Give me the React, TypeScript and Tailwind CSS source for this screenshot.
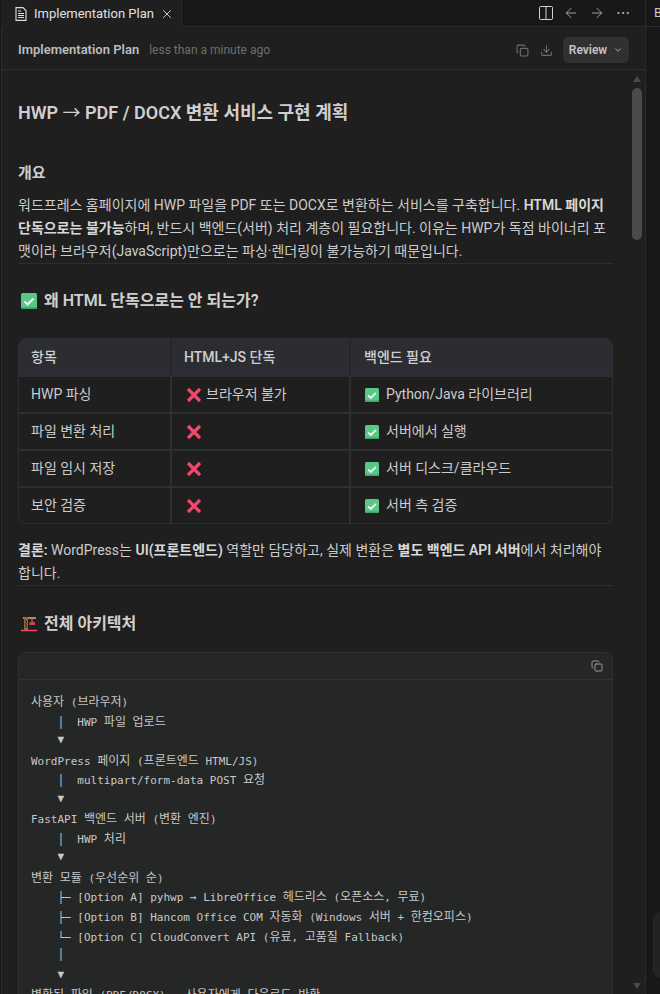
import { ArrowLeft, ArrowRight, ChevronDown, Copy, Download, Ellipsis, X } from "lucide-react";

const rows = [
  { item: "HWP 파싱", html: "브라우저 불가", backend: "Python/Java 라이브러리" },
  { item: "파일 변환 처리", html: "", backend: "서버에서 실행" },
  { item: "파일 임시 저장", html: "", backend: "서버 디스크/클라우드" },
  { item: "보안 검증", html: "", backend: "서버 측 검증" },
];

const codeLines = [
  "사용자 (브라우저)",
  "    │  HWP 파일 업로드",
  "    ▼",
  "WordPress 페이지 (프론트엔드 HTML/JS)",
  "    │  multipart/form-data POST 요청",
  "    ▼",
  "FastAPI 백엔드 서버 (변환 엔진)",
  "    │  HWP 처리",
  "    ▼",
  "변환 모듈 (우선순위 순)",
  "    ├─ [Option A] pyhwp → LibreOffice 헤드리스 (오픈소스, 무료)",
  "    ├─ [Option B] Hancom Office COM 자동화 (Windows 서버 + 한컴오피스)",
  "    └─ [Option C] CloudConvert API (유료, 고품질 Fallback)",
  "    │",
  "    ▼",
  "변환된 파일 (PDF/DOCX) → 사용자에게 다운로드 반환",
];

// hangul is a touch larger than the latin part of the code font
function CodeLine({ text }: { text: string }) {
  return (
    <div className="h-[19.55px] whitespace-pre">
      {text.split(/([가-힣]+)/).map((part, i) =>
        i % 2 === 1 ? (
          <span key={i} className="text-[12px] font-['Noto_Sans_CJK_KR',sans-serif]">
            {part}
          </span>
        ) : (
          part
        ),
      )}
    </div>
  );
}

function CheckEmoji({ size = 14 }: { size?: number }) {
  return (
    <svg width={size} height={size} viewBox="0 0 14 14" className="shrink-0">
      <rect width="14" height="14" rx="1.5" fill="#58c985" />
      <path d="M0 12.5h14V13a1 1 0 0 1-1 1H1a1 1 0 0 1-1-1z" fill="#3fa768" />
      <path d="M3 7.5l2.8 2.5L11 4.8" fill="none" stroke="#f2f2f2" strokeWidth="1.8" />
    </svg>
  );
}

function CrossEmoji() {
  return (
    <svg width="16" height="16" viewBox="0 0 16 16" className="shrink-0">
      <path d="M2 2l12 12M14 2L2 14" fill="none" stroke="#f0476b" strokeWidth="3.2" />
    </svg>
  );
}

function CraneEmoji() {
  return (
    <svg width="16" height="16" viewBox="0 0 16 16" className="shrink-0">
      <path d="M2 1h13v2H2z" fill="#b08a4e" />
      <path d="M3 1h4v13H3z" fill="#8c6d3c" />
      <path d="M4 4l2 2-2 2 2 2-2 2" fill="none" stroke="#2a2420" strokeWidth="1" />
      <path d="M11 3v3" stroke="#999" strokeWidth="1" />
      <path d="M8.5 6h5.5v3H8.500z" fill="#c9415c" />
      <path d="M0 14.500h16" stroke="#f0476b" strokeWidth="1.500" />
    </svg>
  );
}

function FileIcon() {
  return (
    <svg width="12" height="14" viewBox="0 0 12 14" fill="none" stroke="#dcdcdc" strokeWidth="1.1" className="shrink-0">
      <path d="M1 .6h7l3 3v9.8H1z" />
      <path d="M3 4h3M3 6.5h6M3 8.5h6M3 10.5h6" />
    </svg>
  );
}

function SplitIcon() {
  return (
    <svg width="14" height="14" viewBox="0 0 14 14" fill="none" stroke="#d0d0d0" strokeWidth="1" className="shrink-0">
      <rect x=".5" y=".5" width="13" height="13" rx="1" />
      <path d="M7 1v12" />
    </svg>
  );
}

export default function App() {
  return (
    <div className="w-[660px] h-[994px] overflow-hidden flex bg-[#181818] text-[#cccccc] font-['Roboto','Noto_Sans_CJK_KR',sans-serif]">
      <div className="w-[646px] h-full shrink-0 flex flex-col pl-px border-r border-[#2b2b2b]">
        <div className="h-[27px] shrink-0 flex items-stretch justify-between border-b border-[#2b2b2b]">
          <div className="w-[181px] -mb-px flex items-center pl-[14px] bg-[#1f1f1f] border-r border-[#2b2b2b] text-[13px] text-[#e0e0e0] whitespace-nowrap">
            <FileIcon />
            <span className="ml-[7px] w-[119px]">Implementation Plan</span>
            <X size={14} strokeWidth={1.5} className="ml-[7px]" />
          </div>
          <div className="flex items-center gap-[10px] pr-[14px] text-[#cccccc]">
            <SplitIcon />
            <ArrowLeft size={16} strokeWidth={1.1} />
            <ArrowRight size={16} strokeWidth={1.1} />
            <Ellipsis size={16} strokeWidth={1.2} />
          </div>
        </div>

        <div className="h-[43px] shrink-0 flex items-center justify-between pt-[4px] pl-[16px] pr-[16px] bg-[#1f1f1f] border-l border-b border-l-[#2b2b2b] border-b-[#2e2e2e]">
          <div className="flex items-baseline gap-[10px]">
            <span className="text-[13px] font-semibold text-[#bdbdbd]">Implementation Plan</span>
            <span className="text-[12px] text-[#6e6e6e]">less than a minute ago</span>
          </div>
          <div className="flex items-center">
            <Copy size={13} className="text-[#6e6e6e]" />
            <Download size={13} className="text-[#6e6e6e] ml-[11px]" />
            <div className="ml-[10px] h-[26px] w-[66px] rounded-md bg-[#313131] flex items-center justify-center gap-[6px] text-[12px] font-semibold text-[#c4c4c4]">
              Review
              <ChevronDown size={10} />
            </div>
          </div>
        </div>

        <div className="relative flex-1 min-h-0 overflow-hidden bg-[#1f1f1f] pl-[16px] pr-[32px] border-l border-[#2b2b2b]">
          <h1 className="mt-[31px] text-[18px] leading-[24px] font-semibold text-[#cfcfcf]">
            HWP <span className="font-normal">→</span> PDF / DOCX 변환 서비스 구현 계획
          </h1>

          <h2 className="mt-[37px] text-[15px] leading-[22px] font-semibold text-[#cfcfcf]">개요</h2>
          <p className="mt-[10px] text-[14px] leading-[23px] border-b border-[#2e2e2e]">
            워드프레스 홈페이지에 HWP 파일을 PDF 또는 DOCX로 변환하는 서비스를 구축합니다.{" "}
            <strong className="font-semibold text-[#d8d8d8]">HTML 페이지 단독으로는 불가능</strong>하며, 반드시 백엔드(서버)
            처리 계층이 필요합니다. 이유는 HWP가 독점 바이너리 포맷이라 브라우저(JavaScript)만으로는 파싱·렌더링이 불가능하기
            때문입니다.
          </p>

          <h2 className="mt-[25px] flex items-center gap-[7px] pl-[3px] text-[16px] leading-[24px] font-semibold text-[#cfcfcf]">
            <CheckEmoji size={16} />왜 HTML 단독으로는 안 되는가?
          </h2>

          <div className="mt-[25px] rounded-lg border border-[#2e2f33] overflow-hidden text-[14px]">
            <div className="grid grid-cols-[151px_179px_1fr] h-[36px] bg-[#2c2d32] font-medium text-[#cfcfcf]">
              <div className="flex items-center px-3">항목</div>
              <div className="flex items-center px-3 border-l-2 border-[#25262a]">HTML+JS 단독</div>
              <div className="flex items-center px-[13px] border-l-2 border-[#25262a]">백엔드 필요</div>
            </div>
            {rows.map((row) => (
              <div key={row.item} className="grid grid-cols-[151px_179px_1fr] h-[37px] border-t-2 border-[#2e2f33]">
                <div className="flex items-center px-3">{row.item}</div>
                <div className="flex items-center gap-[4px] px-[14px] border-l-2 border-[#2e2f33]">
                  <CrossEmoji />
                  {row.html}
                </div>
                <div className="flex items-center gap-[7px] px-[14px] border-l-2 border-[#2e2f33]">
                  <CheckEmoji />
                  {row.backend}
                </div>
              </div>
            ))}
          </div>

          <p className="mt-[15px] text-[14px] leading-[23px] border-b border-[#2e2e2e]">
            <strong className="font-semibold text-[#d8d8d8]">결론:</strong> WordPress는{" "}
            <strong className="font-semibold text-[#d8d8d8]">UI(프론트엔드)</strong> 역할만 담당하고, 실제 변환은{" "}
            <strong className="font-semibold text-[#d8d8d8]">별도 백엔드 API 서버</strong>에서 처리해야 합니다.
          </p>

          <h2 className="mt-[26px] flex items-center gap-[7px] pl-[3px] text-[16px] leading-[24px] font-semibold text-[#cfcfcf]">
            <CraneEmoji />전체 아키텍처
          </h2>

          <div className="mt-[16px] rounded-t-lg border border-[#303236] bg-[#252626]">
            <div className="h-[27px] flex items-center justify-end pr-[9px] border-b border-[#303236]">
              <Copy size={12} className="text-[#9a9a9a]" />
            </div>
            <div className="px-3 pt-[11px] pb-4 text-[11px] leading-[19.55px] text-[#c8c8c8] font-['DejaVu_Sans_Mono',monospace]">
              {codeLines.map((line) => (
                <CodeLine key={line} text={line} />
              ))}
            </div>
          </div>

          <div className="absolute right-[3px] top-[18px] w-[10px] h-[152px] rounded-full bg-[#4a4a4a]" />
          <div className="absolute right-[4px] top-[6px] w-0 h-0 border-x-[4px] border-x-transparent border-b-[6px] border-b-[#4a4a4a]" />
          <div className="absolute right-[4px] bottom-[5px] w-0 h-0 border-x-[4px] border-x-transparent border-t-[6px] border-t-[#4a4a4a]" />
        </div>
      </div>

      <div className="relative flex-1 text-[13px] text-[#cccccc]">
        <div className="h-[27px] pl-[8px] leading-[26px] border-b border-[#2b2b2b] overflow-hidden">B</div>
        <div className="absolute left-[7px] top-[912px] w-[12px] h-[66px] rounded-l-lg bg-[#232323] border border-[#2a2a2a]" />
      </div>
    </div>
  );
}
